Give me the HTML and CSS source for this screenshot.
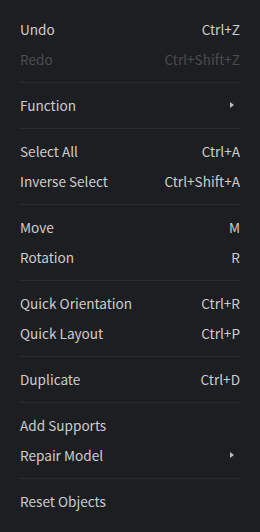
FILE: index.html
```html
<!DOCTYPE html>
<html>
<head>
<meta charset="utf-8">
<link rel="stylesheet" href="styles.css">
</head>
<body>
<div class="menu">
  <div class="item"><span>Undo</span><span class="key">Ctrl+Z</span></div>
  <div class="item disabled"><span>Redo</span><span class="key">Ctrl+Shift+Z</span></div>
  <div class="sep"></div>
  <div class="item"><span>Function</span><span class="arrow"></span></div>
  <div class="sep"></div>
  <div class="item"><span>Select All</span><span class="key">Ctrl+A</span></div>
  <div class="item"><span>Inverse Select</span><span class="key">Ctrl+Shift+A</span></div>
  <div class="sep"></div>
  <div class="item"><span>Move</span><span class="key">M</span></div>
  <div class="item"><span>Rotation</span><span class="key">R</span></div>
  <div class="sep"></div>
  <div class="item"><span>Quick Orientation</span><span class="key">Ctrl+R</span></div>
  <div class="item"><span>Quick Layout</span><span class="key">Ctrl+P</span></div>
  <div class="sep"></div>
  <div class="item"><span>Duplicate</span><span class="key">Ctrl+D</span></div>
  <div class="sep"></div>
  <div class="item"><span>Add Supports</span></div>
  <div class="item"><span>Repair Model</span><span class="arrow"></span></div>
  <div class="sep"></div>
  <div class="item"><span>Reset Objects</span></div>
</div>
</body>
</html>
```
FILE: styles.css
```css
html, body {
  margin: 0;
  padding: 0;
  background: #1d1e21;
}
.menu {
  width: 260px;
  height: 532px;
  box-sizing: border-box;
  padding: 15px 20px;
  background: #1d1e21;
  font-family: "Noto Sans CJK SC", "Noto Sans", sans-serif;
  font-size: 13.6px;
  color: #cdcdcd;
  display: flex;
  flex-direction: column;
}
.item {
  height: 30px;
  box-sizing: border-box;
  padding-bottom: 2px;
  display: flex;
  align-items: center;
  justify-content: space-between;
  line-height: 20px;
}
.item.disabled {
  color: #4b4c4f;
}
.sep {
  height: 16px;
}
.sep::after {
  content: "";
  display: block;
  margin-top: 7px;
  height: 1px;
  background: #2a2b2e;
}
.arrow {
  width: 0;
  height: 0;
  border-top: 3px solid transparent;
  border-bottom: 3px solid transparent;
  border-left: 4px solid #bdbdbd;
  margin-right: 6px;
}
```
